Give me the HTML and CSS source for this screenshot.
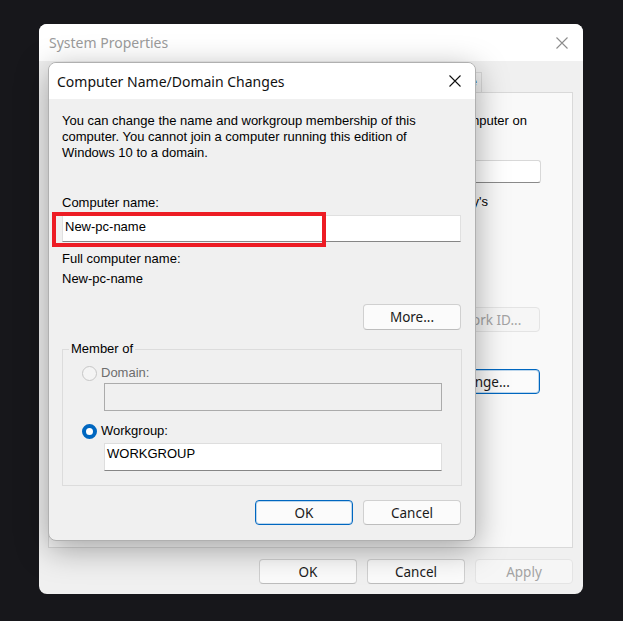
FILE: index.html
```html
<!DOCTYPE html>
<html lang="en">
<head>
<meta charset="utf-8">
<title>Computer Name/Domain Changes</title>
<link rel="stylesheet" href="styles.css">
</head>
<body>
<div class="win outer">
  <div class="titlebar">
    <span class="title">System Properties</span>
    <svg class="close" width="12" height="12" viewBox="0 0 12 12"><path d="M0.5 0.5L11.5 11.5M11.5 0.5L0.5 11.5" stroke="#8c8c8c" stroke-width="1.1" fill="none"/></svg>
  </div>
  <div class="tabs">
    <span class="tab">Remote</span>
  </div>
  <div class="panel">
    <div class="pline l1">computer on</div>
    <div class="pinput"></div>
    <div class="pline l2">Mary's</div>
    <button class="btn wide net" disabled>Network ID...</button>
    <button class="btn wide default chg">Change...</button>
  </div>
  <div class="actions">
    <button class="btn">OK</button>
    <button class="btn">Cancel</button>
    <button class="btn" disabled>Apply</button>
  </div>
</div>

<div class="win inner">
  <div class="titlebar">
    <span class="title">Computer Name/Domain Changes</span>
    <svg class="close" width="12" height="12" viewBox="0 0 12 12"><path d="M0.5 0.5L11.5 11.5M11.5 0.5L0.5 11.5" stroke="#111" stroke-width="1.1" fill="none"/></svg>
  </div>
  <div class="ibody">
    <p class="desc">You can change the name and workgroup membership of this computer. You cannot join a computer running this edition of Windows 10 to a domain.</p>
    <div class="lbl cn">Computer name:</div>
    <div class="field-wrap">
      <div class="field">New-pc-name</div>
      <div class="annot"></div>
    </div>
    <div class="lbl full">Full computer name:</div>
    <div class="val">New-pc-name</div>
    <button class="btn more">More...</button>
    <fieldset class="group">
      <legend>Member of</legend>
      <div class="gbody">
        <div class="radio-row row-domain disabled"><span class="radio off"></span><span>Domain:</span></div>
        <div class="gfield dom"></div>
        <div class="radio-row row-wg"><span class="radio on"></span><span>Workgroup:</span></div>
        <div class="gfield wg">WORKGROUP</div>
      </div>
    </fieldset>
    <div class="actions">
      <button class="btn default">OK</button>
      <button class="btn">Cancel</button>
    </div>
  </div>
</div>
</body>
</html>
```

FILE: styles.css
```css
body {
  margin: 0;
  width: 623px;
  height: 621px;
  position: relative;
  overflow: hidden;
  background: #17171b;
  font-family: "Liberation Sans", Arial, sans-serif;
  font-size: 13px;
  color: #000;
}

.win {
  position: absolute;
  box-sizing: border-box;
  border-radius: 8px;
  background: #f0f0f0;
  display: flex;
  flex-direction: column;
  overflow: hidden;
}

.outer {
  left: 39px;
  top: 24px;
  width: 544px;
  height: 570px;
}

.inner {
  left: 48px;
  top: 62px;
  width: 428px;
  height: 479px;
  border: 1px solid #b0b0b0;
  box-shadow: 0 8px 32px rgba(0, 0, 0, 0.35);
}

.titlebar {
  flex: none;
  height: 37px;
  background: #fff;
  display: flex;
  align-items: center;
  justify-content: space-between;
}

.title {
  font-family: "Noto Sans", "Open Sans", sans-serif;
  font-size: 14px;
}

.outer .titlebar {
  padding: 0 15px 0 10px;
}

.outer .title {
  color: #9b9b9b;
}

.inner .titlebar {
  height: 36px;
  padding: 0 14px 0 8px;
}

.inner .title {
  color: #111;
}

.close {
  display: block;
}

/* tabs + panel of the background window */
.tabs {
  flex: none;
  display: flex;
  justify-content: flex-end;
  margin: 11px 101px 0 0;
  height: 20px;
}

.tab {
  box-sizing: border-box;
  height: 20px;
  padding: 0 4px;
  border: 1px solid #d9d9d9;
  border-bottom: 0;
  line-height: 18px;
  color: #1a1a1a;
  white-space: nowrap;
}

.panel {
  flex: none;
  height: 456px;
  box-sizing: border-box;
  margin: 0 10px 0 9px;
  border: 1px solid #d9d9d9;
  background: #f9f9f9;
  display: flex;
  flex-direction: column;
  align-items: flex-end;
  overflow: hidden;
}

.pline {
  white-space: nowrap;
  line-height: 16px;
}

.l1 {
  margin: 20px 45px 0 0;
}

.pinput {
  margin: 31px 31px 0 0;
  width: 380px;
  height: 23px;
  box-sizing: border-box;
  background: #fff;
  border: 1px solid #d8d8d8;
  border-bottom-color: #8a8a8a;
  border-radius: 3px;
}

.l2 {
  margin: 11px 84px 0 0;
}

.net {
  margin: 97px 32px 0 0;
}

.chg {
  margin: 37px 32px 0 0;
}

/* buttons */
.actions {
  flex: none;
  display: flex;
  justify-content: flex-end;
  gap: 10px;
}

.outer .actions {
  margin-top: 11px;
  padding-right: 10px;
}

.btn {
  box-sizing: border-box;
  width: 98px;
  height: 25px;
  padding: 0;
  border: 1px solid #d0d0d0;
  border-bottom-color: #bdbdbd;
  border-radius: 4px;
  background: #fbfbfb;
  font-family: "Noto Sans", "Open Sans", sans-serif;
  font-size: 13.5px;
  color: #1a1a1a;
}

.btn.wide {
  width: 120px;
}

.btn.default {
  border-color: #0067c0;
  box-shadow: inset 0 0 0 1px rgba(0, 103, 192, 0.25);
}

.btn:disabled {
  color: #a3a3a3;
  border-color: #e4e4e4;
  background: #f6f6f6;
}

/* inner dialog body */
.ibody {
  flex: 1;
  display: flex;
  flex-direction: column;
  padding: 14px 14px 0 13px;
}

.desc {
  margin: 0;
  line-height: 16px;
}

.lbl,
.val {
  line-height: 16px;
}

.cn {
  margin-top: 34px;
}

.field-wrap {
  position: relative;
  margin-top: 4px;
}

.field {
  box-sizing: border-box;
  height: 27px;
  background: #fff;
  border: 1px solid #e0e0e0;
  border-bottom-color: #868686;
  padding: 3px 0 0 2px;
  line-height: 16px;
}

.annot {
  position: absolute;
  left: -10px;
  top: -3px;
  width: 274px;
  height: 35px;
  box-sizing: border-box;
  border: 4px solid #ed1c24;
}

.full {
  margin-top: 9px;
}

.val {
  margin-top: 4px;
}

.more {
  align-self: flex-end;
  margin-top: 17px;
  height: 26px;
}

.group {
  margin: 11px -1px 0 0;
  padding: 0;
  border: 1px solid #dcdcdc;
  min-width: 0;
}

.group legend {
  margin-left: 6px;
  padding: 0 2px;
  line-height: 16px;
}

.gbody {
  padding: 0 19px 14px 19px;
}

.radio-row {
  display: flex;
  align-items: center;
  gap: 4px;
  height: 16px;
  line-height: 16px;
}

.radio-row.disabled {
  color: #6d6d6d;
}

.row-domain {
  margin-top: 8px;
}

.row-wg {
  margin-top: 12px;
}

.radio {
  flex: none;
  width: 15px;
  height: 15px;
  box-sizing: border-box;
  border-radius: 50%;
}

.radio.off {
  border: 1px solid #c6c6c6;
  background: #f4f4f4;
}

.radio.on {
  border: 4px solid #0067c0;
  background: #fff;
}

.gfield {
  box-sizing: border-box;
  height: 28px;
  margin-left: 22px;
  padding: 2px 0 0 2px;
  line-height: 16px;
}

.gfield.dom {
  margin-top: 2px;
  border: 1px solid #ababab;
  background: #f0f0f0;
}

.gfield.wg {
  margin-top: 4px;
  background: #fff;
  border: 1px solid #dedede;
  border-bottom-color: #868686;
}

.inner .actions {
  margin-top: 14px;
}
```
